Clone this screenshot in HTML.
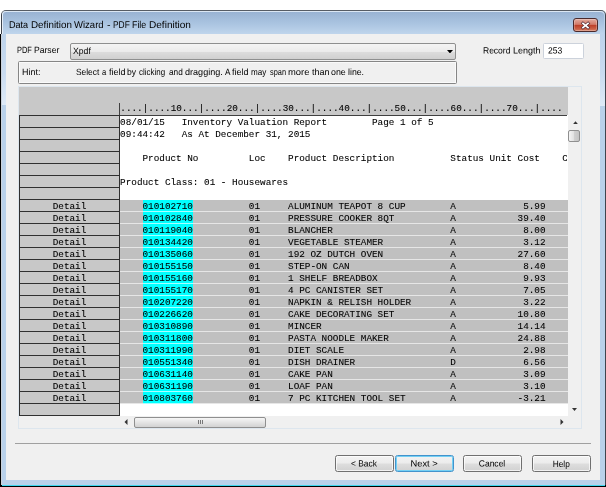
<!DOCTYPE html>
<html><head><meta charset="utf-8"><title>Data Definition Wizard</title>
<style>
html,body{margin:0;padding:0;}
body{width:606px;height:487px;position:relative;overflow:hidden;background:#fff;font-family:"Liberation Sans",sans-serif;font-size:9px;color:#000;}
div{position:absolute;box-sizing:border-box;}
#blk{left:0;top:34px;width:2px;height:453px;background:#000;border-right:1px solid #ccd2da;}
#blkb{left:0;top:485px;width:606px;height:2px;background:#000;}
#cy{left:2px;top:485px;width:603px;height:1px;background:#3fd7ee;}
#win{left:1px;top:10px;width:605px;height:476px;background:#b9d1ea;border:1px solid #3f454e;border-top-color:#565c65;border-radius:5px 5px 0 0;border-bottom:none;}
#tb{left:1px;top:1px;width:602px;height:23px;background:linear-gradient(#99b3d3,#a9c3e0 50%,#bfd5ec);border-radius:4px 4px 0 0;border-top:1px solid #dbe7f4;border-left:1px solid #e6eef8;}
#title{left:10px;top:18px;font-size:9.9px;line-height:12px;white-space:nowrap;transform:translateY(1.2px) scaleX(.948);transform-origin:0 0;}
#client{left:6px;top:34px;width:594px;height:446px;background:#f0f0f0;}
.lbl{white-space:nowrap;line-height:11px;transform-origin:0 0;}
.btn span{display:inline-block;}
.wl{left:0;width:606px;height:11px;line-height:11px;white-space:pre;}
.w{position:absolute;top:0;transform-origin:0 0;white-space:pre;}
#combo{left:70px;top:42.6px;width:386.3px;height:17px;border:1px solid #8e8f8f;border-radius:2px;background:linear-gradient(#f4f4f4,#ebebeb 50%,#dddddd 51%,#d0d0d0);}
#hint{left:17.5px;top:61px;width:439px;height:23px;border:1px solid #868686;border-radius:1.5px;background:#f0f0f0;box-shadow:inset 0 0 0 1px #fafafa;}
#rec{left:543px;top:42.5px;width:41px;height:16px;border-radius:1.5px;border:1px solid #ccd2db;background:#fff;}
#panel{left:18px;top:86px;width:564px;height:343px;border:1px solid #dde6ee;background:#f0f0f0;}
#hdr{left:19px;top:87px;width:548.5px;height:28px;background:#c8c8c8;}
#rulv{left:119px;top:103px;width:1px;height:12px;background:#404040;}
#ruler{left:120.3px;top:103px;font-family:"Liberation Mono",monospace;font-size:9.333px;line-height:12px;white-space:pre;}
#text{left:120px;top:115px;width:448px;height:301px;background:#fff;}
.rh{left:19px;width:101px;height:13px;border:1px solid #303030;background:#c8c8c8;font-family:"Liberation Mono",monospace;font-size:9.333px;line-height:11px;padding-top:1px;text-align:center;}
.ln{left:120.1px;height:14px;margin-top:2px;font-family:"Liberation Mono",monospace;font-size:9.333px;line-height:12px;white-space:pre;width:447px;overflow:hidden;}
.band{left:120px;width:448px;height:12px;margin-top:1px;background:#c0c0c0;border-bottom:1px solid #e6e6e6;}
.cy{left:143px;width:50px;height:12px;margin-top:1px;background:#00ffff;border-bottom:1px solid #a8ffff;}
.btn{top:455px;width:58.6px;height:17px;border:1px solid #707070;border-radius:2.5px;background:linear-gradient(#f3f3f3,#ececec 48%,#dedede 52%,#d1d1d1);text-align:center;line-height:15px;font-size:9px;box-shadow:inset 0 0 0 1px rgba(255,255,255,.7);}
#ruler,.ln,.rh{-webkit-text-stroke:.08px #000;}
#root{left:0;top:0;width:606px;height:487px;will-change:transform;}
</style></head><body>
<div id="root">
<div id="win"></div>
<div id="blk"></div><div id="blkb"></div><div id="cy"></div>
<div id="tbw" style="left:1px;top:10px;width:605px;height:24px;"><div id="tb"></div></div>
<div class="wl" style="top:18.6px;font-size:9.9px;line-height:12px;"><span class="w" style="left:9.2px;transform:rotate(.03deg) scale(0.918,1)">Data </span><span class="w" style="left:30.9px;transform:rotate(.03deg) scale(0.994,1)">Definition </span><span class="w" style="left:73.9px;transform:rotate(.03deg) scale(0.965,1)">Wizard </span><span class="w" style="left:107.2px;transform:rotate(.03deg) scale(1.080,1)">- </span><span class="w" style="left:113.2px;transform:rotate(.03deg) scale(0.849,1)">PDF </span><span class="w" style="left:132.0px;transform:rotate(.03deg) scale(0.895,1)">File </span><span class="w" style="left:148.7px;transform:rotate(.03deg) scale(1.019,1)">Definition</span></div>
<div id="close" style="left:573px;top:18px;width:25px;height:13.5px;border:1px solid #4a2a2c;border-radius:3px;background:linear-gradient(#e3ab9f,#d27a68 45%,#bd3f28 52%,#cc6247 85%,#d98a70);box-shadow:inset 0 0 0 1px rgba(255,255,255,.25);"></div>
<svg style="position:absolute;left:580px;top:20.5px" width="11" height="9" viewBox="0 0 11 9"><path d="M3 2.4 L8 6.6 M8 2.4 L3 6.6" stroke="#5b3038" stroke-width="3.2" stroke-linecap="square"/><path d="M3 2.4 L8 6.6 M8 2.4 L3 6.6" stroke="#fff" stroke-width="1.8" stroke-linecap="square"/></svg>
<div style="left:2px;top:34px;width:4px;height:71px;background:linear-gradient(#bdd3eb,#c9dbf0 55%,#deeaf7);"></div>
<div style="left:600px;top:34px;width:5px;height:72px;background:linear-gradient(#bdd3eb,#c9dbf0 55%,#deeaf7);"></div>
<div id="client"></div>
<div class="wl" style="top:45.3px;font-size:9px;"><span class="w" style="left:16.7px;transform:rotate(.03deg) scale(0.822,1)">PDF </span><span class="w" style="left:33.7px;transform:rotate(.03deg) scale(0.955,1)">Parser</span></div>
<div id="combo"></div>
<div class="lbl" style="left:73px;top:46px;transform:rotate(.03deg) scaleX(.962)">Xpdf</div>
<svg style="position:absolute;left:446.7px;top:50px" width="6" height="3.4" viewBox="0 0 6 3.4"><path d="M0 0 H6 L3 3.4 Z" fill="#000"/></svg>
<div class="wl" style="top:45px;font-size:9px;transform:translateY(.5px);"><span class="w" style="left:483.2px;transform:rotate(.03deg) scale(0.944,1)">Record </span><span class="w" style="left:512.9px;transform:rotate(.03deg) scale(0.999,1)">Length</span></div>
<div id="rec"></div>
<div class="lbl" style="left:547.5px;top:45px;transform:translateY(.5px) rotate(.03deg) scaleX(.947)">253</div>
<div id="hint"></div>
<div class="lbl" style="left:21.8px;top:66.7px;transform:rotate(.03deg) scaleX(.995)">Hint:</div>
<div class="wl" style="top:67px;font-size:9px;"><span class="w" style="left:76.1px;transform:rotate(.03deg) scale(0.930,1)">Select </span><span class="w" style="left:102.4px;transform:rotate(.03deg) scale(0.841,1)">a </span><span class="w" style="left:108.9px;transform:rotate(.03deg) scale(1.004,1)">field </span><span class="w" style="left:127.2px;transform:rotate(.03deg) scale(0.954,1)">by </span><span class="w" style="left:139.4px;transform:rotate(.03deg) scale(0.884,1)">clicking </span><span class="w" style="left:168.7px;transform:rotate(.03deg) scale(0.916,1)">and </span><span class="w" style="left:184.6px;transform:rotate(.03deg) scale(1.007,1)">dragging. </span><span class="w" style="left:225.1px;transform:rotate(.03deg) scale(0.902,1)">A </span><span class="w" style="left:232.4px;transform:rotate(.03deg) scale(0.997,1)">field </span><span class="w" style="left:250.8px;transform:rotate(.03deg) scale(0.901,1)">may </span><span class="w" style="left:269.5px;transform:rotate(.03deg) scale(0.819,1)">span </span><span class="w" style="left:287.6px;transform:rotate(.03deg) scale(1.045,1)">more </span><span class="w" style="left:311.5px;transform:rotate(.03deg) scale(1.001,1)">than </span><span class="w" style="left:331.4px;transform:rotate(.03deg) scale(0.981,1)">one </span><span class="w" style="left:348.2px;transform:rotate(.03deg) scale(0.972,1)">line.</span></div>
<div id="panel"></div>
<div id="hdr"></div>
<div id="text"></div>
<div id="rulv"></div><div style="left:120px;top:114.6px;width:447px;height:1px;background:#404040;"></div>
<div id="ruler">....|....10...|....20...|....30...|....40...|....50...|....60...|....70...|....</div>
<div id="cyanwrap" style="left:0;top:0;width:606px;height:487px;">
<div class="rh" style="top:115px"></div>
<div class="ln" style="top:115px">08/01/15   Inventory Valuation Report        Page 1 of 5</div>
<div class="rh" style="top:127px"></div>
<div class="ln" style="top:127px">09:44:42   As At December 31, 2015</div>
<div class="rh" style="top:139px"></div>
<div class="rh" style="top:151px"></div>
<div class="ln" style="top:151px">    Product No         Loc    Product Description          Status Unit Cost    C</div>
<div class="rh" style="top:163px"></div>
<div class="rh" style="top:175px"></div>
<div class="ln" style="top:175px">Product Class: 01 - Housewares</div>
<div class="rh" style="top:187px"></div>
<div class="rh" style="top:199px">Detail</div>
<div class="band" style="top:199px"></div><div class="cy" style="top:199px"></div>
<div class="ln" style="top:199px">    010102710          01     ALUMINUM TEAPOT 8 CUP        A            5.99</div>
<div class="rh" style="top:211px">Detail</div>
<div class="band" style="top:211px"></div><div class="cy" style="top:211px"></div>
<div class="ln" style="top:211px">    010102840          01     PRESSURE COOKER 8QT          A           39.40</div>
<div class="rh" style="top:223px">Detail</div>
<div class="band" style="top:223px"></div><div class="cy" style="top:223px"></div>
<div class="ln" style="top:223px">    010119040          01     BLANCHER                     A            8.00</div>
<div class="rh" style="top:235px">Detail</div>
<div class="band" style="top:235px"></div><div class="cy" style="top:235px"></div>
<div class="ln" style="top:235px">    010134420          01     VEGETABLE STEAMER            A            3.12</div>
<div class="rh" style="top:247px">Detail</div>
<div class="band" style="top:247px"></div><div class="cy" style="top:247px"></div>
<div class="ln" style="top:247px">    010135060          01     192 OZ DUTCH OVEN            A           27.60</div>
<div class="rh" style="top:259px">Detail</div>
<div class="band" style="top:259px"></div><div class="cy" style="top:259px"></div>
<div class="ln" style="top:259px">    010155150          01     STEP-ON CAN                  A            8.40</div>
<div class="rh" style="top:271px">Detail</div>
<div class="band" style="top:271px"></div><div class="cy" style="top:271px"></div>
<div class="ln" style="top:271px">    010155160          01     1 SHELF BREADBOX             A            9.93</div>
<div class="rh" style="top:283px">Detail</div>
<div class="band" style="top:283px"></div><div class="cy" style="top:283px"></div>
<div class="ln" style="top:283px">    010155170          01     4 PC CANISTER SET            A            7.05</div>
<div class="rh" style="top:295px">Detail</div>
<div class="band" style="top:295px"></div><div class="cy" style="top:295px"></div>
<div class="ln" style="top:295px">    010207220          01     NAPKIN &amp; RELISH HOLDER       A            3.22</div>
<div class="rh" style="top:307px">Detail</div>
<div class="band" style="top:307px"></div><div class="cy" style="top:307px"></div>
<div class="ln" style="top:307px">    010226620          01     CAKE DECORATING SET          A           10.80</div>
<div class="rh" style="top:319px">Detail</div>
<div class="band" style="top:319px"></div><div class="cy" style="top:319px"></div>
<div class="ln" style="top:319px">    010310890          01     MINCER                       A           14.14</div>
<div class="rh" style="top:331px">Detail</div>
<div class="band" style="top:331px"></div><div class="cy" style="top:331px"></div>
<div class="ln" style="top:331px">    010311800          01     PASTA NOODLE MAKER           A           24.88</div>
<div class="rh" style="top:343px">Detail</div>
<div class="band" style="top:343px"></div><div class="cy" style="top:343px"></div>
<div class="ln" style="top:343px">    010311990          01     DIET SCALE                   A            2.98</div>
<div class="rh" style="top:355px">Detail</div>
<div class="band" style="top:355px"></div><div class="cy" style="top:355px"></div>
<div class="ln" style="top:355px">    010551340          01     DISH DRAINER                 D            6.56</div>
<div class="rh" style="top:367px">Detail</div>
<div class="band" style="top:367px"></div><div class="cy" style="top:367px"></div>
<div class="ln" style="top:367px">    010631140          01     CAKE PAN                     A            3.09</div>
<div class="rh" style="top:379px">Detail</div>
<div class="band" style="top:379px"></div><div class="cy" style="top:379px"></div>
<div class="ln" style="top:379px">    010631190          01     LOAF PAN                     A            3.10</div>
<div class="rh" style="top:391px">Detail</div>
<div class="band" style="top:391px"></div><div class="cy" style="top:391px"></div>
<div class="ln" style="top:391px">    010803760          01     7 PC KITCHEN TOOL SET        A           -3.21</div>
<div class="rh" style="top:403px"></div>
</div>
<div id="vs" style="left:568px;top:87px;width:13px;height:329px;background:#f0f0f0;"></div>
<svg style="position:absolute;left:572.5px;top:121.3px" width="5" height="3.2" viewBox="0 0 5 3.2"><path d="M0 3.2 H5 L2.5 0.2 Z" fill="#333"/></svg>
<svg style="position:absolute;left:572.2px;top:407.8px" width="5" height="3.2" viewBox="0 0 5 3.2"><path d="M0 0 H5 L2.5 3 Z" fill="#333"/></svg>
<div style="left:568px;top:130px;width:12px;height:12px;border:1px solid #8f8f8f;border-radius:2px;background:linear-gradient(90deg,#f4f4f4,#e2e2e2 45%,#cfcfcf 55%,#c4c4c4);"></div>
<div id="hs" style="left:120px;top:416px;width:448px;height:12px;background:#f0f0f0;"></div>
<svg style="position:absolute;left:124px;top:419.2px" width="4" height="6" viewBox="0 0 4 6"><path d="M3.5 0 V6 L0.5 3 Z" fill="#333"/></svg>
<svg style="position:absolute;left:559.5px;top:419.2px" width="4" height="6" viewBox="0 0 4 6"><path d="M0.5 0 V6 L3.5 3 Z" fill="#333"/></svg>
<div style="left:134px;top:416.8px;width:132px;height:11.6px;border:1px solid #8f8f8f;border-radius:2px;background:linear-gradient(#f6f6f6,#e4e4e4 50%,#d2d2d2);"></div>
<div style="left:198px;top:420px;width:1px;height:4px;background:#777;"></div>
<div style="left:200px;top:420px;width:1px;height:4px;background:#777;"></div>
<div style="left:202px;top:420px;width:1px;height:4px;background:#777;"></div>
<div style="left:15px;top:443px;width:576px;height:1px;background:#a0a0a0;"></div>
<div class="btn" style="left:335px;"><span style="transform:translateY(.6px) rotate(.03deg) scaleX(.935)">&lt; Back</span></div>
<div class="btn" style="left:395.4px;border-color:#4393cc;box-shadow:inset 0 0 0 1px #74d0f4;"><span style="transform:translate(-1px,.6px) rotate(.03deg) scaleX(1.038)">Next &gt;</span></div>
<div class="btn" style="left:463.2px;"><span style="transform:translateY(.6px) rotate(.03deg) scaleX(.946)">Cancel</span></div>
<div class="btn" style="left:532px;"><span style="transform:translateY(.6px) rotate(.03deg) scaleX(.924)">Help</span></div>
</div>
</body></html>
